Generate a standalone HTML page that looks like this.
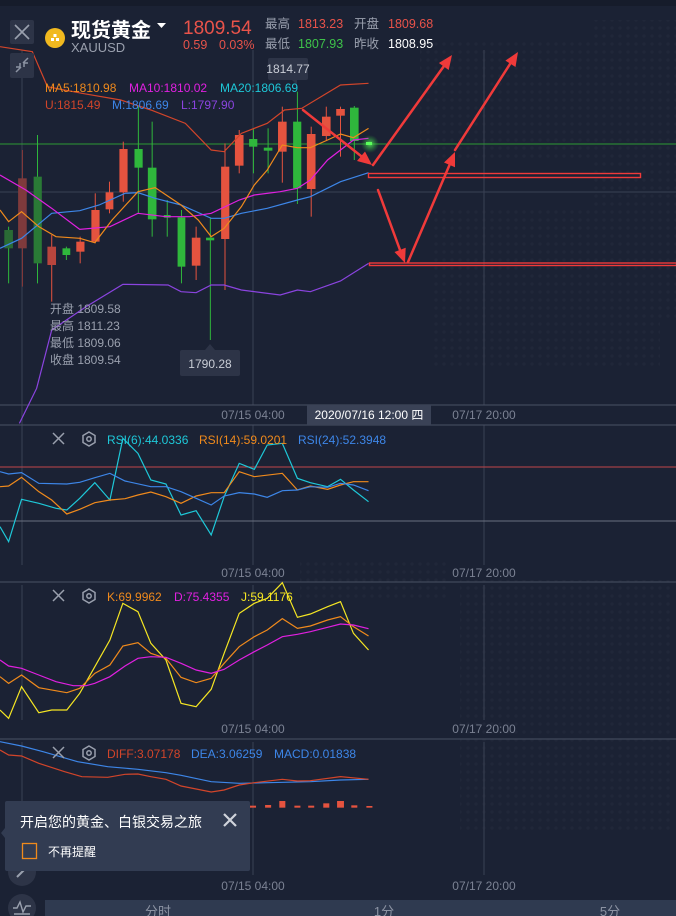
<!DOCTYPE html>
<html><head><meta charset="utf-8"><style>
html,body{margin:0;padding:0;background:#1b2234;}
body{width:676px;height:916px;overflow:hidden;position:relative;font-family:"Liberation Sans","Noto Sans CJK SC",sans-serif;}
svg{position:absolute;left:0;top:0}
.t{font-family:"Liberation Sans","Noto Sans CJK SC",sans-serif}
</style></head><body>
<svg width="676" height="916" viewBox="0 0 676 916" xmlns="http://www.w3.org/2000/svg">
<defs>
<radialGradient id="glow"><stop offset="0" stop-color="#5dff5d" stop-opacity="0.8"/><stop offset="1" stop-color="#2fb73c" stop-opacity="0"/></radialGradient>
<pattern id="dots" width="8" height="8" patternUnits="userSpaceOnUse"><circle cx="4" cy="4" r="1.6" fill="#252d40"/></pattern>
</defs>
<rect width="676" height="916" fill="#1b2234"/>
<rect x="0" y="0" width="676" height="6" fill="#161c2b"/>
<path d="M420 40 h200 v120 h-200z M430 210 h230 v160 h-230z M460 580 h210 v250 h-210z M300 560 h150 v40 h-150z M590 20 h86 v300 h-86z" fill="url(#dots)" opacity="0.45"/>
<g stroke="#3a4154" stroke-width="1">
<line x1="22" y1="50" x2="22" y2="425"/><line x1="253" y1="50" x2="253" y2="405"/><line x1="484" y1="50" x2="484" y2="405"/>
<line x1="0" y1="192" x2="676" y2="192"/>
<line x1="22" y1="425" x2="22" y2="565"/><line x1="253" y1="425" x2="253" y2="565"/><line x1="484" y1="425" x2="484" y2="565"/>
<line x1="22" y1="585" x2="22" y2="720"/><line x1="253" y1="585" x2="253" y2="720"/><line x1="484" y1="585" x2="484" y2="720"/>
<line x1="22" y1="742" x2="22" y2="875"/><line x1="253" y1="742" x2="253" y2="875"/><line x1="484" y1="742" x2="484" y2="875"/>
</g>
<g stroke="#4a5164" stroke-width="1">
<line x1="0" y1="405" x2="676" y2="405"/><line x1="0" y1="425" x2="676" y2="425"/>
<line x1="0" y1="582" x2="676" y2="582"/><line x1="0" y1="739" x2="676" y2="739"/>
</g>
<line x1="0" y1="144" x2="676" y2="144" stroke="#2e9a33" stroke-width="1"/>

<g transform="scale(0.43103,0.33333)">
<g stroke-width="1">
<g stroke="#2fb73c" fill="#2fb73c">
<line x1="20" y1="680" x2="20" y2="850" vector-effect="non-scaling-stroke"/><rect x="10" y="690" width="20" height="55" fill="#2a6b35" stroke="none"/>
<line x1="87" y1="405" x2="87" y2="850" vector-effect="non-scaling-stroke"/><rect x="78" y="530" width="19" height="260" fill="#2a7a36" stroke="none"/>
<line x1="154" y1="740" x2="154" y2="780" vector-effect="non-scaling-stroke"/><rect x="145" y="745" width="18" height="20" stroke="none"/>
<line x1="321" y1="320" x2="321" y2="640" vector-effect="non-scaling-stroke"/><rect x="312" y="447" width="19" height="56" stroke="none"/>
<line x1="353" y1="365" x2="353" y2="710" vector-effect="non-scaling-stroke"/><rect x="343" y="503" width="20" height="155" stroke="none"/>
<line x1="388" y1="600" x2="388" y2="710" vector-effect="non-scaling-stroke"/><rect x="380" y="645" width="16" height="8" stroke="none"/>
<line x1="421" y1="630" x2="421" y2="850" vector-effect="non-scaling-stroke"/><rect x="412" y="652" width="18" height="148" stroke="none"/>
<line x1="488" y1="655" x2="488" y2="1020" vector-effect="non-scaling-stroke"/><rect x="478" y="713" width="19" height="8" stroke="none"/>
<line x1="588" y1="385" x2="588" y2="520" vector-effect="non-scaling-stroke"/><rect x="578" y="417" width="19" height="23" stroke="none"/>
<line x1="622" y1="385" x2="622" y2="520" vector-effect="non-scaling-stroke"/><rect x="612" y="443" width="20" height="9" stroke="none"/>
<line x1="690" y1="275" x2="690" y2="612" vector-effect="non-scaling-stroke"/><rect x="680" y="365" width="19" height="200" stroke="none"/>
<line x1="822" y1="318" x2="822" y2="480" vector-effect="non-scaling-stroke"/><rect x="812" y="323" width="20" height="100" stroke="none"/>
</g>
<g stroke="#e5533f" fill="#e5533f">
<line x1="52" y1="450" x2="52" y2="860" stroke="#8a3a3a" vector-effect="non-scaling-stroke"/><rect x="42" y="535" width="20" height="210" fill="#7f3a3c" stroke="none"/>
<line x1="120" y1="705" x2="120" y2="905" vector-effect="non-scaling-stroke"/><rect x="110" y="740" width="20" height="55" fill="#b8453d" stroke="none"/>
<line x1="186" y1="710" x2="186" y2="790" vector-effect="non-scaling-stroke"/><rect x="177" y="725" width="19" height="30" stroke="none"/>
<line x1="221" y1="580" x2="221" y2="730" vector-effect="non-scaling-stroke"/><rect x="212" y="630" width="19" height="95" stroke="none"/>
<line x1="254" y1="545" x2="254" y2="640" vector-effect="non-scaling-stroke"/><rect x="245" y="577" width="18" height="51" stroke="none"/>
<line x1="286" y1="425" x2="286" y2="605" vector-effect="non-scaling-stroke"/><rect x="277" y="447" width="19" height="130" stroke="none"/>
<line x1="455" y1="680" x2="455" y2="840" vector-effect="non-scaling-stroke"/><rect x="445" y="713" width="20" height="84" stroke="none"/>
<line x1="522" y1="430" x2="522" y2="870" vector-effect="non-scaling-stroke"/><rect x="513" y="500" width="19" height="217" stroke="none"/>
<line x1="555" y1="390" x2="555" y2="520" vector-effect="non-scaling-stroke"/><rect x="545" y="405" width="20" height="92" stroke="none"/>
<line x1="655" y1="320" x2="655" y2="548" vector-effect="non-scaling-stroke"/><rect x="645" y="365" width="20" height="90" stroke="none"/>
<line x1="722" y1="380" x2="722" y2="650" vector-effect="non-scaling-stroke"/><rect x="712" y="402" width="20" height="165" stroke="none"/>
<line x1="757" y1="320" x2="757" y2="420" vector-effect="non-scaling-stroke"/><rect x="747" y="350" width="20" height="58" stroke="none"/>
<line x1="790" y1="320" x2="790" y2="470" vector-effect="non-scaling-stroke"/><rect x="780" y="327" width="20" height="20" stroke="none"/>
</g>
</g>
<g fill="none" stroke-width="1.2">
<polyline vector-effect="non-scaling-stroke" stroke="#d2452a" points="0,140 75,155 110,260 190,280 280,300 350,330 430,370 490,450 520,455 560,400 620,370 660,330 700,325 790,255 855,250"/>
<polyline vector-effect="non-scaling-stroke" stroke="#8b44e0" points="45,1270 85,1165 120,990 200,920 285,853 390,855 420,875 455,878 490,855 520,855 560,870 650,885 690,870 720,875 790,843 855,790"/>
<polyline vector-effect="non-scaling-stroke" stroke="#3d86e8" points="0,745 50,715 120,640 185,632 230,615 290,580 320,578 360,595 420,615 490,655 520,655 560,640 620,625 690,600 720,590 790,545 855,518"/>
<polyline vector-effect="non-scaling-stroke" stroke="#e020e0" points="0,525 60,570 120,625 185,688 255,680 320,640 385,650 440,650 490,640 555,600 590,585 650,575 690,565 720,540 760,480 820,420 855,415"/>
<polyline vector-effect="non-scaling-stroke" stroke="#f08a1c" points="0,630 20,665 50,635 90,680 130,710 185,715 220,728 260,660 320,575 360,563 420,615 460,660 490,710 520,685 560,620 590,555 620,510 655,435 690,443 720,443 760,420 790,402 820,413 855,385"/>
</g>
</g>
<circle cx="370" cy="144" r="9" fill="url(#glow)"/>
<rect x="366" y="142" width="6" height="3" fill="#5cff5c"/>

<rect x="368.5" y="173.5" width="272" height="4" fill="none" stroke="#f03a3a" stroke-width="1.4"/>
<rect x="369.5" y="263" width="307" height="2.5" fill="none" stroke="#f03a3a" stroke-width="1.4"/>
<g stroke="#f03a3a" stroke-width="2.5" fill="#f03a3a" stroke-linecap="round">
<line x1="303" y1="110" x2="361" y2="156"/><polygon stroke="none" points="372,165 357,161 365,151.5"/>
<line x1="373" y1="165" x2="444" y2="66"/><polygon stroke="none" points="452,55 448.7,70 438.9,63"/>
<line x1="378" y1="190" x2="400" y2="250"/><polygon stroke="none" points="405,263 394.5,252 405.7,247.8"/>
<line x1="408" y1="262" x2="449.5" y2="165"/><polygon stroke="none" points="455,152 455,167.3 444,162.5"/>
<line x1="455" y1="150" x2="510" y2="64"/><polygon stroke="none" points="518,52 515.5,67 505.4,60.6"/>
</g>

<rect x="10" y="20" width="24" height="24" rx="2" fill="#2d3447"/>
<path d="M15 25 L29 39 M29 25 L15 39" stroke="#9aa0ae" stroke-width="1.6"/>
<rect x="10" y="53" width="24" height="25" rx="2" fill="#2d3447"/>
<path d="M16 72 L21 67 M28 58 L23 63 M20 63 v4 h-4 M24 67 v-4 h4" stroke="#8c93a3" stroke-width="1.5" fill="none"/>
<circle cx="55" cy="38" r="10" fill="#f1b91f"/>
<path d="M51 41h3v-3h-3z M56 41h3v-3h-3z M53.5 37h3v-3h-3z" fill="#fff"/>
<text x="71" y="37" class="t" font-size="20" fill="#ffffff" font-weight="bold">现货黄金</text>
<path d="M157 23 h9 l-4.5 5z" fill="#fff"/>
<text x="71" y="52" class="t" font-size="13" fill="#9aa0ae">XAUUSD</text>
<text x="183" y="34" class="t" font-size="19" fill="#e8534a">1809.54</text>
<text x="183" y="49" class="t" font-size="12.5" fill="#e8534a">0.59</text>
<text x="219" y="49" class="t" font-size="12.5" fill="#e8534a">0.03%</text>
<g class="t" font-size="12.5">
<text x="265" y="28" fill="#9aa0ae">最高</text><text x="298" y="28" fill="#e8534a">1813.23</text>
<text x="354" y="28" fill="#9aa0ae">开盘</text><text x="388" y="28" fill="#e8534a">1809.68</text>
<text x="265" y="48" fill="#9aa0ae">最低</text><text x="298" y="48" fill="#3ec34a">1807.93</text>
<text x="354" y="48" fill="#9aa0ae">昨收</text><text x="388" y="48" fill="#ffffff">1808.95</text>
</g>
<rect x="268" y="58" width="40" height="22" rx="2" fill="#2d3447"/>
<path d="M292 80 l5 5 l0 -5z" fill="#2d3447"/>
<text x="288" y="73" class="t" font-size="12" fill="#c9cdd6" text-anchor="middle">1814.77</text>
<g class="t" font-size="12">
<text x="45" y="92" fill="#f08a1c">MA5:1810.98</text>
<text x="129" y="92" fill="#e020e0">MA10:1810.02</text>
<text x="220" y="92" fill="#1ec8d8">MA20:1806.69</text>
<text x="45" y="109" fill="#d2452a">U:1815.49</text>
<text x="112" y="109" fill="#3d86e8">M:1806.69</text>
<text x="181" y="109" fill="#8b44e0">L:1797.90</text>
</g>
<g class="t" font-size="12" fill="#9aa0ae">
<text x="50" y="313">开盘 1809.58</text>
<text x="50" y="330">最高 1811.23</text>
<text x="50" y="347">最低 1809.06</text>
<text x="50" y="364">收盘 1809.54</text>
</g>
<path d="M205 350 l5 -6 l5 6z" fill="#2d3447"/>
<rect x="180" y="350" width="60" height="26" rx="2" fill="#2d3447"/>
<text x="210" y="368" class="t" font-size="12" fill="#c9cdd6" text-anchor="middle">1790.28</text>
<g class="t" font-size="12" fill="#7b8293" text-anchor="middle">
<text x="253" y="419">07/15 04:00</text>
<text x="484" y="419">07/17 20:00</text>
<text x="253" y="577">07/15 04:00</text><text x="484" y="577">07/17 20:00</text>
<text x="253" y="733">07/15 04:00</text><text x="484" y="733">07/17 20:00</text>
<text x="253" y="890">07/15 04:00</text><text x="484" y="890">07/17 20:00</text>
</g>
<rect x="307" y="405" width="124" height="20" fill="#3a4256"/>
<text x="369" y="419" class="t" font-size="12" fill="#ffffff" text-anchor="middle">2020/07/16 12:00 四</text>

<line x1="0" y1="467" x2="676" y2="467" stroke="#c0454a" stroke-width="1"/>
<line x1="0" y1="521" x2="676" y2="521" stroke="#6a7080" stroke-width="1"/>
<g transform="translate(0,420) scale(0.43103,0.33333)" fill="none" stroke-width="1.2">
<polyline vector-effect="non-scaling-stroke" stroke="#1ec8d8" points="0,320 20,365 50,238 90,250 130,265 155,270 185,235 220,188 255,240 285,55 320,100 350,180 385,192 420,285 455,272 490,345 520,230 555,130 590,148 620,75 655,70 690,175 720,188 760,200 790,178 820,210 855,245"/>
<polyline vector-effect="non-scaling-stroke" stroke="#f08a1c" points="0,200 20,198 50,172 90,215 120,240 155,282 185,268 220,248 255,240 290,236 320,225 350,216 385,230 420,250 455,228 490,218 520,218 555,155 590,170 655,160 690,210 720,198 760,208 790,195 820,185 855,185"/>
<polyline vector-effect="non-scaling-stroke" stroke="#3d86e8" points="0,155 20,162 50,158 90,190 155,192 185,187 220,173 255,160 290,183 350,200 385,200 420,215 455,235 490,255 520,228 555,218 590,222 620,232 655,212 690,210 720,200 760,202 790,190 820,195 855,212"/>
<polyline vector-effect="non-scaling-stroke" stroke="#f5e623" points="0,870 20,895 50,800 90,878 120,870 155,870 185,820 220,740 255,660 285,550 320,575 350,670 385,720 420,850 455,860 490,808 520,700 555,580 590,550 620,535 655,488 690,592 720,582 760,560 790,545 820,640 855,690"/>
<polyline vector-effect="non-scaling-stroke" stroke="#f08a1c" points="0,770 20,790 50,765 90,803 155,818 185,805 220,760 255,735 285,678 320,668 350,700 385,715 420,772 455,788 490,775 520,730 555,680 590,650 620,630 655,596 690,625 720,618 760,600 790,590 820,620 855,648"/>
<polyline vector-effect="non-scaling-stroke" stroke="#e020e0" points="0,720 20,738 50,745 90,765 130,785 170,797 200,797 220,790 255,770 290,738 320,715 350,710 385,712 420,730 455,750 490,760 520,748 555,720 590,695 620,675 655,650 690,643 720,635 760,622 790,612 820,615 855,626"/>
<polyline vector-effect="non-scaling-stroke" stroke="#3d86e8" points="0,965 50,978 100,995 180,1025 250,1040 320,1048 385,1058 420,1066 490,1085 555,1090 620,1088 720,1085 790,1080 855,1078"/>
<polyline vector-effect="non-scaling-stroke" stroke="#d2452a" points="0,990 20,1005 50,1008 90,1030 150,1055 190,1070 250,1072 290,1063 320,1062 350,1070 385,1078 420,1098 490,1116 520,1110 555,1095 590,1088 655,1078 690,1083 720,1082 790,1070 855,1078"/>
<g fill="#e5533f" stroke="none">
<rect x="580" y="1157" width="14" height="6"/><rect x="615" y="1155" width="14" height="8"/><rect x="648" y="1143" width="14" height="20"/><rect x="683" y="1157" width="14" height="6"/><rect x="715" y="1157" width="14" height="6"/><rect x="750" y="1150" width="14" height="13"/><rect x="782" y="1143" width="16" height="20"/><rect x="815" y="1156" width="14" height="7"/><rect x="850" y="1158" width="14" height="5"/>
</g>
</g>
<g stroke="#9aa0ae" stroke-width="1.5" fill="none">
<path d="M53 433 l11 11 M64 433 l-11 11"/><polygon points="89,432 95,435.5 95,442.5 89,446 83,442.5 83,435.5"/><circle cx="89" cy="439" r="2.2"/>
<path d="M53 590 l11 11 M64 590 l-11 11"/><polygon points="89,589 95,592.5 95,599.5 89,603 83,599.5 83,592.5"/><circle cx="89" cy="596" r="2.2"/>
<path d="M53 747 l11 11 M64 747 l-11 11"/><polygon points="89,746 95,749.5 95,756.5 89,760 83,756.5 83,749.5"/><circle cx="89" cy="753" r="2.2"/>
</g>
<g class="t" font-size="12">
<text x="107" y="444" fill="#1ec8d8">RSI(6):44.0336</text>
<text x="199" y="444" fill="#f08a1c">RSI(14):59.0201</text>
<text x="298" y="444" fill="#3d86e8">RSI(24):52.3948</text>
<text x="107" y="601" fill="#f08a1c">K:69.9962</text>
<text x="174" y="601" fill="#e020e0">D:75.4355</text>
<text x="241" y="601" fill="#f5e623">J:59.1176</text>
<text x="107" y="758" fill="#d2452a">DIFF:3.07178</text>
<text x="191" y="758" fill="#3d86e8">DEA:3.06259</text>
<text x="274" y="758" fill="#3d86e8">MACD:0.01838</text>
</g>

<circle cx="22" cy="872" r="14" fill="#2d3447"/>
<path d="M17 877 l8 -8" stroke="#9aa0ae" stroke-width="2"/>
<circle cx="22" cy="908" r="14" fill="#2d3447"/>
<path d="M13 908 h4 l3 -6 l3 10 l3 -6 h5 M14 914 h16" stroke="#9aa0ae" stroke-width="1.4" fill="none"/>
<rect x="45" y="900" width="631" height="16" fill="#2f3a50"/>
<g class="t" font-size="13" fill="#8c93a3" text-anchor="middle">
<text x="158" y="916">分时</text><text x="384" y="916">1分</text><text x="610" y="916">5分</text>
</g>
<path d="M5 828 l-4 5 l4 5z" fill="#323c52"/>
<rect x="5" y="801" width="245" height="70" rx="2" fill="#323c52"/>
<text x="20" y="827" class="t" font-size="14" fill="#ffffff">开启您的黄金、白银交易之旅</text>
<path d="M224 814 l12 12 M236 814 l-12 12" stroke="#d0d4dc" stroke-width="2.2"/>
<rect x="22.5" y="843.5" width="14" height="15" fill="none" stroke="#f08a1c" stroke-width="1.3"/>
<text x="48" y="856" class="t" font-size="12" fill="#ffffff">不再提醒</text>
</svg>
</body></html>
